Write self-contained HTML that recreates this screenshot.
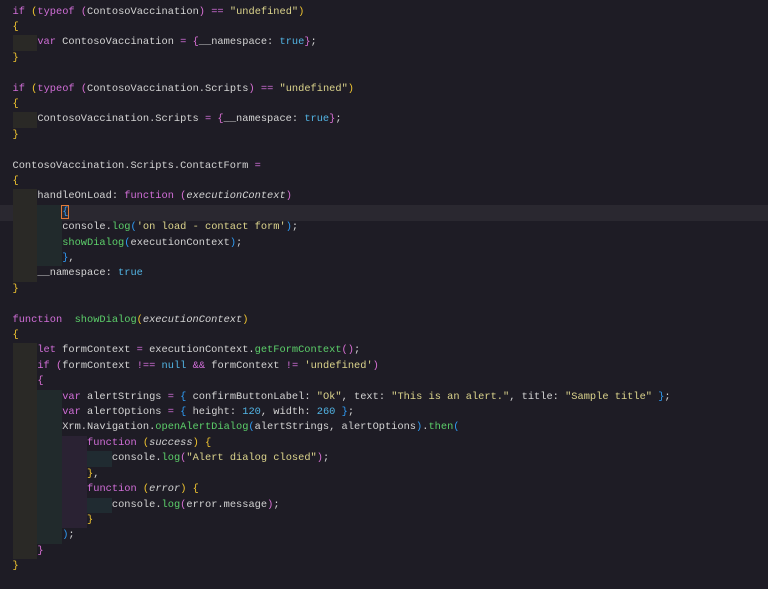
<!DOCTYPE html>
<html><head><meta charset="utf-8"><style>
html,body{margin:0;padding:0;background:#1e1c25;width:768px;height:589px;overflow:hidden}
#c{position:absolute;left:12.5px;top:4.5px;font-family:"Liberation Mono",monospace;font-size:10.35px;line-height:15.42px;color:#d4d4d4}
.l{height:15.42px;position:relative;white-space:pre}
.hl{position:absolute;left:0;width:768px;height:15.42px;background:#2a2830}
i{font-style:normal;display:inline-block;height:15.42px;vertical-align:top}
.a{background:#2a2926}.b{background:#212a2c}.c{background:#2a2233}.d{background:#202b31}
.k{color:#d16ed8}.o{color:#d16ed8}.s{color:#dcd48c}.f{color:#5ccf6a}.n{color:#52b4e4}
.y{color:#f2c630}.p{color:#da70d6}.u{color:#2f9cf5}.it{font-style:italic}
.cur{outline:1px solid #e07a3a}
</style></head><body>
<div class="hl" style="top:205.2px"></div>
<div id="c">
<div class="l"><span class="k">if</span> <span class="y">(</span><span class="k">typeof</span> <span class="p">(</span>ContosoVaccination<span class="p">)</span> <span class="o">==</span> <span class="s">"undefined"</span><span class="y">)</span></div>
<div class="l"><span class="y">{</span></div>
<div class="l"><i class="a">    </i><span class="k">var</span> ContosoVaccination <span class="o">=</span> <span class="p">{</span>__namespace: <span class="n">true</span><span class="p">}</span>;</div>
<div class="l"><span class="y">}</span></div>
<div class="l"> </div>
<div class="l"><span class="k">if</span> <span class="y">(</span><span class="k">typeof</span> <span class="p">(</span>ContosoVaccination.Scripts<span class="p">)</span> <span class="o">==</span> <span class="s">"undefined"</span><span class="y">)</span></div>
<div class="l"><span class="y">{</span></div>
<div class="l"><i class="a">    </i>ContosoVaccination.Scripts <span class="o">=</span> <span class="p">{</span>__namespace: <span class="n">true</span><span class="p">}</span>;</div>
<div class="l"><span class="y">}</span></div>
<div class="l"> </div>
<div class="l">ContosoVaccination.Scripts.ContactForm <span class="o">=</span></div>
<div class="l"><span class="y">{</span></div>
<div class="l"><i class="a">    </i>handleOnLoad: <span class="k">function</span> <span class="p">(</span><span class="it">executionContext</span><span class="p">)</span></div>
<div class="l"><i class="a">    </i><i class="b">    </i><span class="u cur">{</span></div>
<div class="l"><i class="a">    </i><i class="b">    </i>console.<span class="f">log</span><span class="u">(</span><span class="s">'on load - contact form'</span><span class="u">)</span>;</div>
<div class="l"><i class="a">    </i><i class="b">    </i><span class="f">showDialog</span><span class="u">(</span>executionContext<span class="u">)</span>;</div>
<div class="l"><i class="a">    </i><i class="b">    </i><span class="u">}</span>,</div>
<div class="l"><i class="a">    </i>__namespace: <span class="n">true</span></div>
<div class="l"><span class="y">}</span></div>
<div class="l"> </div>
<div class="l"><span class="k">function</span>  <span class="f">showDialog</span><span class="y">(</span><span class="it">executionContext</span><span class="y">)</span></div>
<div class="l"><span class="y">{</span></div>
<div class="l"><i class="a">    </i><span class="k">let</span> formContext <span class="o">=</span> executionContext.<span class="f">getFormContext</span><span class="p">()</span>;</div>
<div class="l"><i class="a">    </i><span class="k">if</span> <span class="p">(</span>formContext <span class="o">!==</span> <span class="n">null</span> <span class="o">&amp;&amp;</span> formContext <span class="o">!=</span> <span class="s">'undefined'</span><span class="p">)</span></div>
<div class="l"><i class="a">    </i><span class="p">{</span></div>
<div class="l"><i class="a">    </i><i class="b">    </i><span class="k">var</span> alertStrings <span class="o">=</span> <span class="u">{</span> confirmButtonLabel: <span class="s">"Ok"</span>, text: <span class="s">"This is an alert."</span>, title: <span class="s">"Sample title"</span> <span class="u">}</span>;</div>
<div class="l"><i class="a">    </i><i class="b">    </i><span class="k">var</span> alertOptions <span class="o">=</span> <span class="u">{</span> height: <span class="n">120</span>, width: <span class="n">260</span> <span class="u">}</span>;</div>
<div class="l"><i class="a">    </i><i class="b">    </i>Xrm.Navigation.<span class="f">openAlertDialog</span><span class="u">(</span>alertStrings, alertOptions<span class="u">)</span>.<span class="f">then</span><span class="u">(</span></div>
<div class="l"><i class="a">    </i><i class="b">    </i><i class="c">    </i><span class="k">function</span> <span class="y">(</span><span class="it">success</span><span class="y">)</span> <span class="y">{</span></div>
<div class="l"><i class="a">    </i><i class="b">    </i><i class="c">    </i><i class="d">    </i>console.<span class="f">log</span><span class="p">(</span><span class="s">"Alert dialog closed"</span><span class="p">)</span>;</div>
<div class="l"><i class="a">    </i><i class="b">    </i><i class="c">    </i><span class="y">}</span>,</div>
<div class="l"><i class="a">    </i><i class="b">    </i><i class="c">    </i><span class="k">function</span> <span class="y">(</span><span class="it">error</span><span class="y">)</span> <span class="y">{</span></div>
<div class="l"><i class="a">    </i><i class="b">    </i><i class="c">    </i><i class="d">    </i>console.<span class="f">log</span><span class="p">(</span>error.message<span class="p">)</span>;</div>
<div class="l"><i class="a">    </i><i class="b">    </i><i class="c">    </i><span class="y">}</span></div>
<div class="l"><i class="a">    </i><i class="b">    </i><span class="u">)</span>;</div>
<div class="l"><i class="a">    </i><span class="p">}</span></div>
<div class="l"><span class="y">}</span></div>
</div>
</body></html>
